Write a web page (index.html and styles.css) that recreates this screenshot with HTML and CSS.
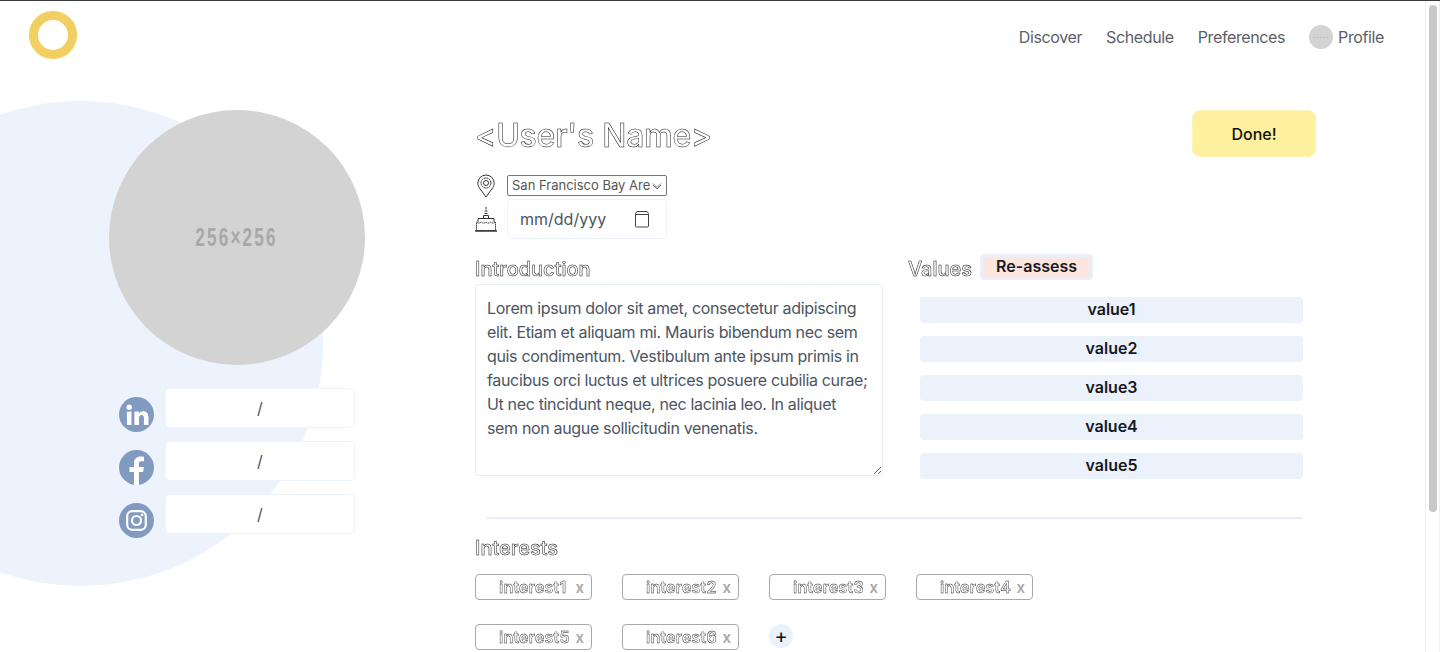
FILE: index.html
```html
<!DOCTYPE html>
<html lang="en">
<head>
    <meta charset="UTF-8">
    <meta name="viewport" content="width=device-width, initial-scale=1.0">
    <title>Edit Profile</title>
    <link rel="stylesheet" href="styles.css">
</head>
<body>
    <div class="window">
        <div class="page">
            <header class="topbar">
                <a href="#" class="logo"></a>
                <nav class="nav">
                    <a href="#">Discover</a>
                    <a href="#">Schedule</a>
                    <a href="#">Preferences</a>
                    <a href="#" class="nav-profile"><span class="avatar-small">·····</span>Profile</a>
                </nav>
            </header>

            <main class="content">
                <div class="blob"></div>

                <aside class="side">
                    <div class="avatar"><span class="avatar-text">256×256</span></div>
                    <div class="social-row">
                        <svg class="social-icon" viewBox="0 0 35 35">
                            <circle cx="17.5" cy="17.5" r="17.5" fill="#809ac0"/>
                            <circle cx="10.2" cy="10.3" r="2.7" fill="#fff"/>
                            <rect x="7.9" y="14.6" width="4.6" height="13.4" fill="#fff"/>
                            <path d="M15.4 14.6h4.4v1.9c.8-1.3 2.4-2.3 4.3-2.3 4 0 5.4 2.5 5.4 6.4V28h-4.6v-6.7c0-1.9-.5-3.3-2.2-3.3-1.9 0-2.7 1.4-2.7 3.3V28h-4.6z" fill="#fff"/>
                        </svg>
                        <input class="social-input" type="text" value="/">
                    </div>
                    <div class="social-row">
                        <svg class="social-icon" viewBox="0 0 35 35">
                            <circle cx="17.5" cy="17.5" r="17.5" fill="#809ac0"/>
                            <path d="M15 35V22h-4.500v-5H15v-3.800C15 8.700 17.700 6.400 21.700 6.400c1.400 0 2.800.2 3.300.3v4.500h-2.500c-2 0-2.600 1.100-2.600 2.500V17h5l-.8 5h-4.200v13z" fill="#fff"/>
                        </svg>
                        <input class="social-input" type="text" value="/">
                    </div>
                    <div class="social-row">
                        <svg class="social-icon" viewBox="0 0 35 35">
                            <circle cx="17.5" cy="17.500" r="17.5" fill="#809ac0"/>
                            <rect x="8.200" y="8.200" width="18.600" height="18.600" rx="5" fill="none" stroke="#fff" stroke-width="2.200"/>
                            <circle cx="17.500" cy="17.500" r="4.500" fill="none" stroke="#fff" stroke-width="2.200"/>
                            <circle cx="23.100" cy="11.900" r="1.300" fill="#fff"/>
                        </svg>
                        <input class="social-input" type="text" value="/">
                    </div>
                </aside>

                <section class="details">
                    <div class="title-row">
                        <h1 class="outlined user-name">&lt;User's Name&gt;</h1>
                        <button class="done-btn">Done!</button>
                    </div>

                    <div class="meta-row location-row">
                        <svg class="meta-icon" viewBox="0 0 22 24" fill="none" stroke="#333" stroke-width="1">
                            <path d="M11 23 4.300 13.800C3.300 12.300 2.800 10.800 2.800 9.200a8.200 8.200 0 0 1 16.400 0c0 1.600-.5 3.100-1.500 4.600z"/>
                            <circle cx="11" cy="9" r="5" stroke-dasharray="2 .6"/>
                            <circle cx="11" cy="9" r="2.500"/>
                        </svg>
                        <select class="location-select">
                            <option>San Francisco Bay Area</option>
                        </select>
                    </div>

                    <div class="meta-row">
                        <svg class="meta-icon cake-icon" viewBox="0 0 22 26" fill="none" stroke="#333" stroke-width="1">
                            <path d="M11 1v2.500M9.500 5h3M9.500 7.500h3"/>
                            <path d="M8.500 9.500h5v3h-5z"/>
                            <path d="M3 16v-3.500h16V16"/>
                            <path d="M1.500 16c1.500 1.500 3 1.500 4.750 0 1.500 1.500 3 1.500 4.750 0 1.500 1.500 3 1.500 4.750 0 1.500 1.500 3 1.500 4.750 0v8.500h-19z" stroke-dasharray="1.500 .6"/>
                            <path d="M0 25h22" stroke-width="1.500"/>
                        </svg>
                        <div class="date-field">
                            <span>mm/dd/yyy</span>
                            <svg class="date-icon" viewBox="0 0 18 18" fill="none" stroke="#444" stroke-width="1">
                                <path d="M2.500 4.500V16c0 .6.400 1 1 1h11c.6 0 1-.4 1-1V4.500"/>
                                <path d="M2.500 4.500C2.500 2.500 3.500 1.500 5 1.500h8c1.500 0 2.500 1 2.500 3z"/>
                            </svg>
                        </div>
                    </div>

                    <div class="columns">
                        <div class="intro">
                            <h2 class="outlined label">Introduction</h2>
                            <textarea class="intro-text">Lorem ipsum dolor sit amet, consectetur adipiscing elit. Etiam et aliquam mi. Mauris bibendum nec sem quis condimentum. Vestibulum ante ipsum primis in faucibus orci luctus et ultrices posuere cubilia curae; Ut nec tincidunt neque, nec lacinia leo. In aliquet sem non augue sollicitudin venenatis.</textarea>
                        </div>
                        <div class="values">
                            <div class="values-head">
                                <h2 class="outlined label">Values</h2>
                                <button class="reassess-btn">Re-assess</button>
                            </div>
                            <ul class="value-list">
                                <li>value1</li>
                                <li>value2</li>
                                <li>value3</li>
                                <li>value4</li>
                                <li>value5</li>
                            </ul>
                        </div>
                    </div>

                    <hr class="divider">

                    <h2 class="outlined label">Interests</h2>
                    <div class="chips">
                        <div class="chip"><span class="outlined chip-text">interest1</span><span class="chip-x">x</span></div>
                        <div class="chip"><span class="outlined chip-text">interest2</span><span class="chip-x">x</span></div>
                        <div class="chip"><span class="outlined chip-text">interest3</span><span class="chip-x">x</span></div>
                        <div class="chip"><span class="outlined chip-text">interest4</span><span class="chip-x">x</span></div>
                        <div class="chip"><span class="outlined chip-text">interest5</span><span class="chip-x">x</span></div>
                        <div class="chip"><span class="outlined chip-text">interest6</span><span class="chip-x">x</span></div>
                        <button class="add-btn">+</button>
                    </div>
                </section>
            </main>
        </div>

        <div class="scroll-track"><div class="scroll-thumb"></div></div>
    </div>
</body>
</html>
```

FILE: styles.css
```css
* {
    box-sizing: border-box;
}
html, body {
    margin: 0;
    padding: 0;
    height: 652px;
    overflow: hidden;
}
body {
    font-family: Inter, "Liberation Sans", sans-serif;
    background-color: #fff;
    color: #4b5563;
}
.window {
    display: flex;
    height: 652px;
    border-top: 1px solid #3c3c3c;
    overflow: hidden;
}
.page {
    flex: 1;
    min-width: 0;
}

/* top bar */
.topbar {
    display: flex;
    justify-content: space-between;
    height: 72px;
    padding: 10px 41px 0 29px;
}
.logo {
    display: block;
    width: 48px;
    height: 48px;
    border: 9px solid #f2cf63;
    border-radius: 50%;
    box-shadow: 0 0 2px #fbeeb0;
}
.nav {
    display: flex;
    align-items: center;
    gap: 24px;
    height: 52px;
}
.nav a {
    color: #5b6068;
    font-size: 16px;
    letter-spacing: -0.38px;
    text-decoration: none;
}
.nav-profile {
    display: flex;
    align-items: center;
    gap: 5px;
}
.avatar-small {
    display: flex;
    align-items: center;
    justify-content: center;
    width: 24px;
    height: 24px;
    border-radius: 50%;
    background-color: #d3d3d3;
    color: #a5a5a5;
    font-size: 8px;
    letter-spacing: 1px;
    overflow: hidden;
}

/* main layout */
.content {
    position: relative;
    display: flex;
    height: 579px;
    padding-top: 37px;
}
.blob {
    position: absolute;
    left: -162px;
    top: 28px;
    width: 485px;
    height: 485px;
    border-radius: 50%;
    background-color: #ecf3fd;
}
.side {
    position: relative;
    width: 475px;
    flex-shrink: 0;
    padding-left: 109px;
}
.avatar {
    display: flex;
    align-items: center;
    justify-content: center;
    width: 256px;
    height: 255px;
    margin-bottom: 23px;
    border-radius: 50%;
    background-color: #d3d3d3;
}
.avatar-text {
    color: #a8a8a8;
    font-family: "Liberation Sans", sans-serif;
    font-size: 26px;
    font-weight: 700;
    letter-spacing: 3.3px;
    transform: scaleX(0.66);
}
.social-row {
    display: flex;
    gap: 11px;
    margin-left: 10px;
    margin-bottom: 9px;
}
.social-icon {
    width: 35px;
    height: 35px;
    margin-top: 9px;
    flex-shrink: 0;
}
.social-input {
    width: 190px;
    height: 40px;
    border: 1px solid #edf2fb;
    border-radius: 4px;
    background-color: #fff;
    color: #4b5563;
    font-family: inherit;
    font-size: 16px;
    text-align: center;
}

.details {
    position: relative;
    width: 841px;
}
.title-row {
    display: flex;
    justify-content: space-between;
    height: 47px;
    margin-bottom: 15px;
}
/* white letters with a thin dark edge, on their own layer for grey antialiasing */
.outlined {
    margin: 0;
    color: #fff;
    -webkit-text-stroke: 0.5px #111;
    will-change: transform;
}
.user-name {
    font-size: 32px;
    font-weight: 500;
    letter-spacing: -0.23px;
    line-height: 52px;
}
.done-btn {
    width: 124px;
    height: 47px;
    border: 1px solid #fdf3b8;
    border-radius: 8px;
    background-color: #fdf09f;
    color: #111;
    font-family: inherit;
    font-size: 16px;
    font-weight: 500;
}

.meta-row {
    display: flex;
    align-items: center;
    gap: 10px;
}
.location-row {
    height: 27px;
}
.meta-icon {
    width: 22px;
    height: 24px;
    flex-shrink: 0;
}
.cake-icon {
    height: 26px;
}
.location-select {
    width: 160px;
    height: 21px;
    padding: 0 16px 2px 4px;
    border: 1px solid #777;
    border-radius: 2px;
    background: #fff url("data:image/svg+xml,%3Csvg xmlns='http://www.w3.org/2000/svg' width='10' height='8'%3E%3Cpath d='M1 1.500 5 5.500 9 1.500M1 3 5 7 9 3' fill='none' stroke='%23555' stroke-width='.8'/%3E%3C/svg%3E") no-repeat right 4px center;
    color: #555;
    font-family: inherit;
    font-size: 13px;
    appearance: none;
}
.date-field {
    display: flex;
    align-items: center;
    justify-content: space-between;
    width: 160px;
    height: 40px;
    padding: 0 15px 0 12px;
    border: 1px solid #edf2fb;
    border-radius: 4px;
    font-size: 16px;
}
.date-icon {
    width: 18px;
    height: 18px;
}

.columns {
    display: flex;
    margin-top: 15px;
}
.intro {
    width: 408px;
    margin-right: 25px;
}
.label {
    font-size: 20px;
    font-weight: 500;
    line-height: 30px;
}
.intro-text {
    display: block;
    width: 408px;
    height: 192px;
    padding: 11px 13px 11px 11px;
    border: 1px solid #e6edf9;
    border-radius: 4px;
    color: #4b5563;
    font-family: inherit;
    font-size: 16px;
    letter-spacing: -0.34px;
    line-height: 24px;
    outline: none;
}
.values {
    width: 395px;
}
.values-head {
    display: flex;
    gap: 8px;
    height: 26px;
    margin-bottom: 17px;
}
.reassess-btn {
    width: 113px;
    height: 26px;
    padding: 0 0 2px;
    border: 3px solid #e9f0fb;
    border-radius: 4px;
    background-color: #fce6df;
    color: #1a1a1a;
    font-family: inherit;
    font-size: 16px;
    font-weight: 600;
    line-height: 18px;
}
.value-list {
    margin: 0 0 0 12px;
    padding: 0;
    list-style: none;
}
.value-list li {
    height: 26px;
    margin-bottom: 13px;
    border-radius: 4px;
    background-color: #ebf2fc;
    color: #15181f;
    font-size: 16px;
    font-weight: 600;
    line-height: 24px;
    text-align: center;
}

.divider {
    width: 816px;
    height: 2px;
    margin: 25px 0 14px 12px;
    border: none;
    background-color: #e9eef8;
}
.chips {
    display: grid;
    grid-template-columns: repeat(4, 117px);
    column-gap: 30px;
    row-gap: 24px;
    margin-top: 11px;
}
.chip {
    display: flex;
    align-items: center;
    height: 26px;
    padding: 0 7px 0 23px;
    border: 1px solid #a8a8a8;
    border-radius: 4px;
}
.chip-text {
    font-size: 16px;
    font-weight: 600;
    letter-spacing: 0.2px;
    -webkit-text-stroke-width: 0.4px;
}
.chip-x {
    margin-left: auto;
    color: #a9a9a9;
    font-size: 15px;
    font-weight: 600;
}
.add-btn {
    width: 24px;
    height: 24px;
    padding: 0;
    border: none;
    border-radius: 50%;
    background-color: #ebf1fc;
    color: #111;
    font-family: inherit;
    font-size: 20px;
    line-height: 24px;
}

/* fake window scrollbar */
.scroll-track {
    width: 15px;
    padding: 4px 1px 0 3px;
    border-left: 1px solid #eeeef3;
    border-right: 1px solid #eeeef3;
    flex-shrink: 0;
}
.scroll-thumb {
    width: 8px;
    height: 507px;
    border-radius: 4px;
    background-color: #c8c8c8;
}
```
